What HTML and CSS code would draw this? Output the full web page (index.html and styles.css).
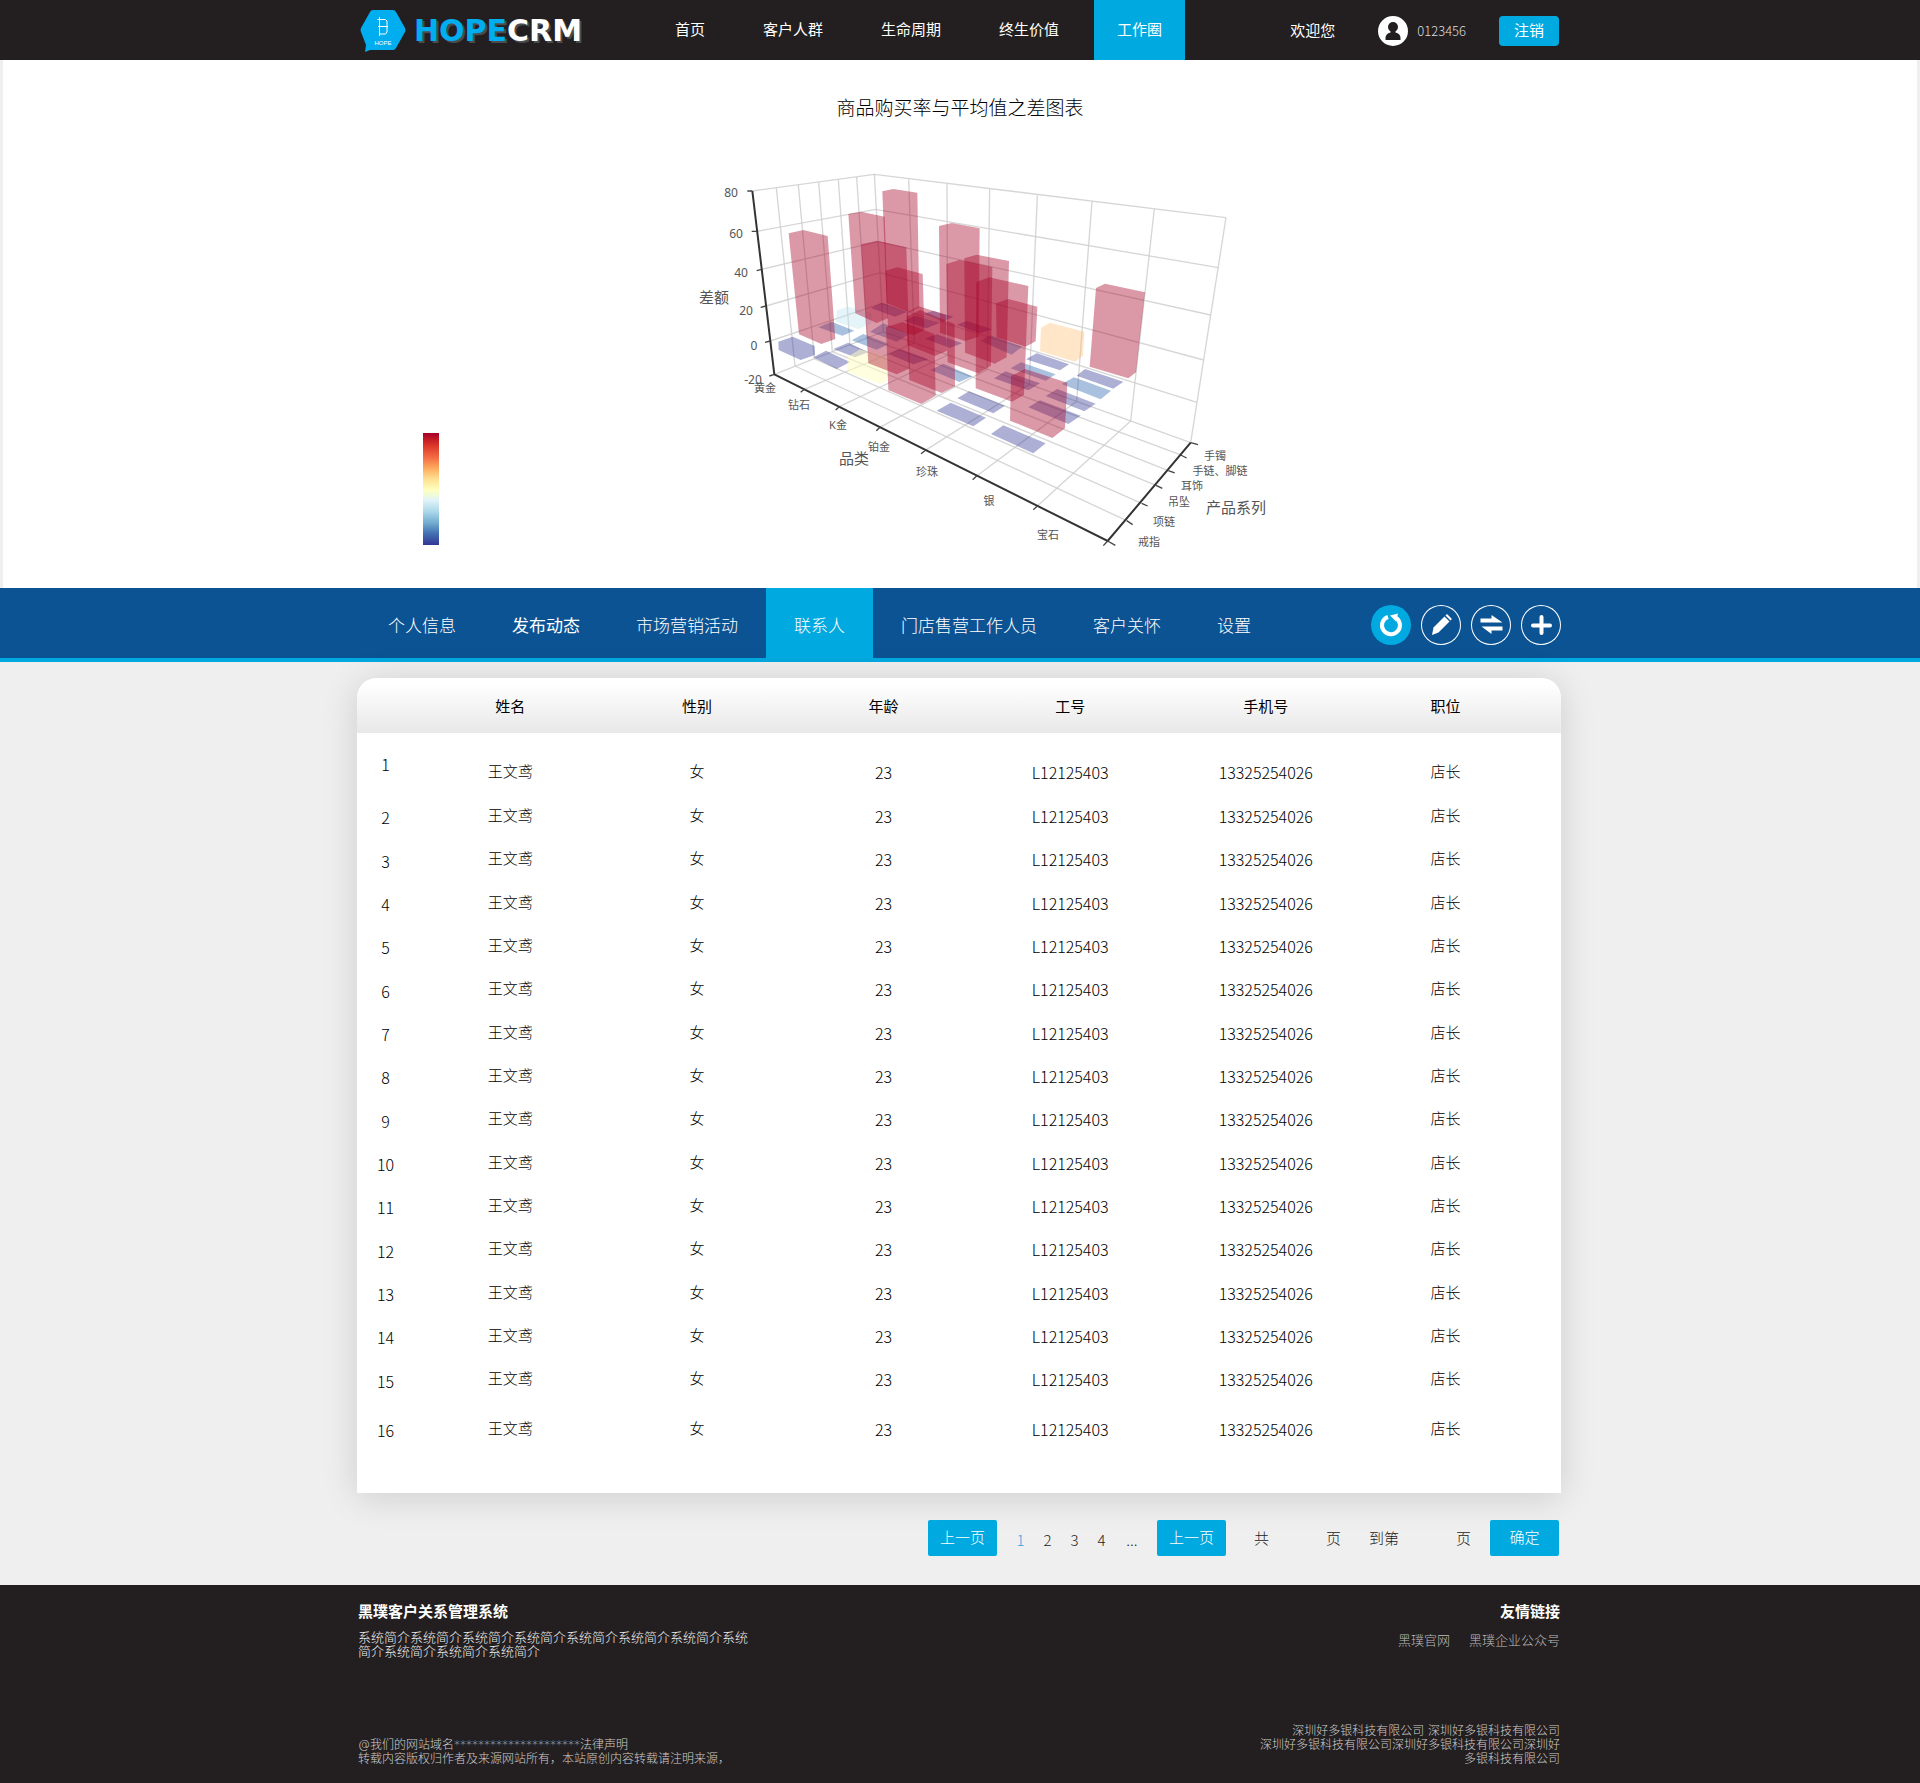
FILE: index.html
```html
<!DOCTYPE html>
<html lang="zh-CN">
<head>
<meta charset="utf-8">
<meta name="viewport" content="width=device-width, initial-scale=1">
<title>HOPECRM</title>
<link rel="stylesheet" href="styles.css">
</head>
<body>
<header class="topbar">
  <div class="wrap topbar-row">
    <a class="logo" href="#">
      <svg class="logo-mark" viewBox="0 0 46 42" width="46" height="42" aria-hidden="true">
        <path class="logo-hex" d="M13 0H33Q35 0 36 2L45 18Q46 20 45 22L36 38Q35 40 33 40H10L5 42L6 35L1 22Q0 20 1 18L10 2Q11 0 13 0Z"/>
        <path class="logo-line" d="M19.500 7V26M17.500 9.500H25.500L27 11V14.500V22L25.500 24H19.500M18 16.500H28"/>
        <text class="logo-small" x="23" y="35" text-anchor="middle">HOPE</text>
      </svg>
      <span class="wordmark">HOPE<span class="wordmark-crm">CRM</span></span>
    </a>
    <nav class="main-nav">
      <a href="#">首页</a>
      <a href="#">客户人群</a>
      <a href="#">生命周期</a>
      <a href="#">终生价值</a>
      <a href="#" class="current">工作圈</a>
    </nav>
    <div class="user">
      <span>欢迎您</span>
      <svg class="avatar" viewBox="0 0 30 30" width="30" height="30" aria-hidden="true">
        <circle cx="15" cy="15" r="15" fill="#fff"/>
        <circle cx="15" cy="11" r="5" fill="#231f20"/>
        <path d="M12.500 14H17.500V16.500Q22.500 17.500 22.500 22V24H7.500V22Q7.500 17.500 12.500 16.500Z" fill="#231f20"/>
      </svg>
      <span class="user-id">0123456</span>
      <button type="button" class="logout">注销</button>
    </div>
  </div>
</header>

<main>
<section class="chart-panel">
  <h1 class="chart-title">商品购买率与平均值之差图表</h1>
  <div class="wrap">
    <div class="chart-row">
    <div class="legend"></div>
    <svg class="chart" viewBox="0 0 600 400" width="600" height="400" role="img" aria-label="商品购买率与平均值之差图表">
      <g transform="scale(.33333) translate(-30 -30)">
        <g class="grid">
          <path d="M217 123L583 73L1638 203M231 244L587 178L1615 353M245 358L593 275L1592 495M258 468L600 368L1571 630M271 573L605 460L1551 757M283 673L610 545L1532 878"/>
          <path d="M289 114L345 648M355 105L403 626M416 97L457 605M475 89L510 585M530 81L562 564M583 73L610 545"/>
          <path d="M686 88L703 579M801 102L803 615M929 118L922 658M1072 136L1048 703M1236 155L1190 754M1423 177L1352 813M1638 203L1532 878"/>
          <path d="M373 718L703 579M478 770L803 615M600 832L922 658M735 902L1048 703M890 978L1190 754M1073 1067L1352 813"/>
          <path d="M345 648L1340 1112M403 626L1385 1060M457 605L1428 1006M510 585L1465 962M562 564L1502 915"/>
        </g>
        <g class="low">
          <polygon points="295,575 338,560 404,588 405,615 362,630 296,600"/>
          <polygon points="400,622 438,602 510,636 470,657"/>
          <polygon class="mid" points="415,532 455,515 523,542 487,557"/>
          <polygon points="460,597 505,578 565,607 525,622"/>
          <polygon class="mid" points="515,571 550,552 627,582 590,599"/>
          <polygon class="mid" points="570,545 610,520 688,552 650,575"/>
          <polygon points="573,474 605,458 680,486 645,500"/>
          <polygon points="672,512 705,497 780,518 740,535"/>
          <polygon points="730,492 760,482 820,500 788,515"/>
          <polygon points="830,524 860,513 937,538 900,550"/>
          <polygon points="625,612 660,597 745,628 700,643"/>
          <polygon points="735,566 770,553 846,580 810,594"/>
          <polygon class="mid" points="752,660 790,641 877,679 838,696"/>
          <polygon points="832,745 867,724 975,767 940,790"/>
          <polygon points="770,782 812,758 918,803 880,829"/>
          <polygon points="933,852 970,826 1097,880 1060,910"/>
          <polygon points="1045,772 1080,751 1202,797 1165,822"/>
          <polygon points="1097,738 1132,717 1247,761 1213,784"/>
          <polygon class="mid" points="1145,702 1182,682 1293,722 1262,748"/>
          <polygon points="1190,677 1215,657 1330,695 1300,716"/>
          <polygon points="1038,628 1070,610 1167,643 1140,661"/>
          <polygon class="mid" points="992,655 1023,637 1127,673 1097,692"/>
          <polygon points="942,685 977,664 1080,700 1045,721"/>
          <polygon class="mid" points="902,573 930,556 1026,590 995,614"/>
        </g>
        <polygon class="pale" points="470,480 505,470 575,490 575,520 535,538 468,515"/>
        <polygon class="yellow" points="503,620 540,598 625,620 625,690 600,702 502,665"/>
        <polygon class="orange" points="1083,533 1110,518 1213,545 1209,617 1185,635 1080,603"/>
        <g class="high">
          <polygon points="326,250 370,240 443,258 466,567 424,582 357,553"/>
          <polygon points="505,192 543,185 614,200 624,505 590,519 526,490"/>
          <polygon points="607,124 640,117 712,128 718,472 690,487 620,460"/>
          <polygon points="543,283 592,272 679,292 690,655 650,673 565,640"/>
          <polygon points="616,362 652,352 728,372 733,540 700,556 624,530"/>
          <polygon points="618,532 667,516 763,552 767,737 724,762 625,720"/>
          <polygon points="680,487 717,469 797,495 801,602 765,618 682,585"/>
          <polygon points="680,500 720,480 824,522 825,709 785,729 688,690"/>
          <polygon points="777,228 815,219 899,235 896,560 855,573 780,548"/>
          <polygon points="799,342 838,330 937,351 933,647 895,670 803,637"/>
          <polygon points="853,325 890,314 987,333 980,622 944,641 855,608"/>
          <polygon points="889,396 928,382 1045,408 1032,735 996,755 887,715"/>
          <polygon points="948,460 985,447 1072,470 1067,574 1037,590 950,562"/>
          <polygon points="993,678 1035,657 1162,698 1155,835 1117,864 990,812"/>
          <polygon points="1248,414 1275,401 1395,427 1368,667 1345,685 1229,650"/>
        </g>
        <path class="axis" d="M217 123L283 673L1283 1173L1532 878"/>
        <path class="tick" d="M217 123H202M231 244H215M245 358L230 362M258 468L242 472M271 573L255 577M283 673L268 678M373 718L362 727M478 770L467 780M600 832L589 842M735 902L723 911M890 978L878 989M1073 1067L1060 1079M1283 1173L1270 1187M1283 1173L1306 1186M1340 1112L1358 1124M1385 1060L1403 1068M1428 1006L1447 1015M1465 962L1484 969M1502 915L1520 924M1532 878L1554 884"/>
      </g>
      <g class="ticks">
        <text x="41" y="37">80</text><text x="46" y="78">60</text><text x="51" y="117">40</text>
        <text x="56" y="155">20</text><text x="64" y="190">0</text><text x="63" y="224">-20</text>
      </g>
      <g class="cats">
        <text x="75" y="232">黄金</text><text x="109" y="249">钻石</text><text x="148" y="269">K金</text>
        <text x="189" y="291">铂金</text><text x="237" y="316">珍珠</text><text x="299" y="345">银</text>
        <text x="358" y="379">宝石</text><text x="525" y="300">手镯</text><text x="530" y="315">手链、脚链</text>
        <text x="502" y="330">耳饰</text><text x="489" y="346">吊坠</text><text x="474" y="366">项链</text>
        <text x="459" y="386">戒指</text>
      </g>
      <g class="names">
        <text x="24" y="143">差额</text><text x="164" y="304">品类</text><text x="546" y="353">产品系列</text>
      </g>
    </svg>
    </div>
  </div>
</section>

<section class="subbar">
  <div class="wrap subbar-row">
    <nav class="sub-nav">
      <a href="#">个人信息</a>
      <a href="#" class="strong">发布动态</a>
      <a href="#">市场营销活动</a>
      <a href="#" class="current">联系人</a>
      <a href="#">门店售营工作人员</a>
      <a href="#">客户关怀</a>
      <a href="#">设置</a>
    </nav>
    <div class="tools">
      <button type="button" class="tool active" aria-label="刷新">
        <svg viewBox="0 0 40 40" width="40" height="40"><path d="M17 11.800A9 9 0 1 0 24.500 12.500" fill="none" stroke="#fff" stroke-width="4"/><path d="M19 10.500L27 8.500L25 16.500Z" fill="#fff"/></svg>
      </button>
      <button type="button" class="tool" aria-label="编辑">
        <svg viewBox="0 0 40 40" width="40" height="40"><path d="M12.500 22.500L23.500 11.500L28.500 16.500L17.500 27.500L11 30Z" fill="#fff"/><path d="M24.500 10.500L25.500 9.500Q26 9 26.500 9.500L30.500 13.500Q31 14 30.500 14.500L29.500 15.500Z" fill="#fff"/></svg>
      </button>
      <button type="button" class="tool" aria-label="切换">
        <svg viewBox="0 0 40 40" width="40" height="40"><path d="M9.500 13.500H20.500V10L31.500 17.500H9.500ZM31.500 21.500V25.500H20.500V29L10.500 21.500Z" fill="#fff"/></svg>
      </button>
      <button type="button" class="tool" aria-label="添加">
        <svg viewBox="0 0 40 40" width="40" height="40"><path d="M20.500 12V28M12 20.500H29" stroke="#fff" stroke-width="4" stroke-linecap="round"/></svg>
      </button>
    </div>
  </div>
</section>

<section class="wrap">
  <div class="card">
    <table class="people">
      <colgroup><col class="c-index"><col class="c-name"><col class="c-sex"><col class="c-age"><col class="c-code"><col class="c-phone"><col class="c-post"></colgroup>
      <thead>
        <tr><td></td><th scope="col">姓名</th><th scope="col">性别</th><th scope="col">年龄</th><th scope="col">工号</th><th scope="col">手机号</th><th scope="col">职位</th></tr>
      </thead>
      <tbody>
        <tr><th scope="row">1</th><td>王文鸢</td><td>女</td><td class="num">23</td><td class="num">L12125403</td><td class="num">13325254026</td><td>店长</td></tr>
        <tr><th scope="row">2</th><td>王文鸢</td><td>女</td><td class="num">23</td><td class="num">L12125403</td><td class="num">13325254026</td><td>店长</td></tr>
        <tr><th scope="row">3</th><td>王文鸢</td><td>女</td><td class="num">23</td><td class="num">L12125403</td><td class="num">13325254026</td><td>店长</td></tr>
        <tr><th scope="row">4</th><td>王文鸢</td><td>女</td><td class="num">23</td><td class="num">L12125403</td><td class="num">13325254026</td><td>店长</td></tr>
        <tr><th scope="row">5</th><td>王文鸢</td><td>女</td><td class="num">23</td><td class="num">L12125403</td><td class="num">13325254026</td><td>店长</td></tr>
        <tr><th scope="row">6</th><td>王文鸢</td><td>女</td><td class="num">23</td><td class="num">L12125403</td><td class="num">13325254026</td><td>店长</td></tr>
        <tr><th scope="row">7</th><td>王文鸢</td><td>女</td><td class="num">23</td><td class="num">L12125403</td><td class="num">13325254026</td><td>店长</td></tr>
        <tr><th scope="row">8</th><td>王文鸢</td><td>女</td><td class="num">23</td><td class="num">L12125403</td><td class="num">13325254026</td><td>店长</td></tr>
        <tr><th scope="row">9</th><td>王文鸢</td><td>女</td><td class="num">23</td><td class="num">L12125403</td><td class="num">13325254026</td><td>店长</td></tr>
        <tr><th scope="row">10</th><td>王文鸢</td><td>女</td><td class="num">23</td><td class="num">L12125403</td><td class="num">13325254026</td><td>店长</td></tr>
        <tr><th scope="row">11</th><td>王文鸢</td><td>女</td><td class="num">23</td><td class="num">L12125403</td><td class="num">13325254026</td><td>店长</td></tr>
        <tr><th scope="row">12</th><td>王文鸢</td><td>女</td><td class="num">23</td><td class="num">L12125403</td><td class="num">13325254026</td><td>店长</td></tr>
        <tr><th scope="row">13</th><td>王文鸢</td><td>女</td><td class="num">23</td><td class="num">L12125403</td><td class="num">13325254026</td><td>店长</td></tr>
        <tr><th scope="row">14</th><td>王文鸢</td><td>女</td><td class="num">23</td><td class="num">L12125403</td><td class="num">13325254026</td><td>店长</td></tr>
        <tr><th scope="row">15</th><td>王文鸢</td><td>女</td><td class="num">23</td><td class="num">L12125403</td><td class="num">13325254026</td><td>店长</td></tr>
        <tr><th scope="row">16</th><td>王文鸢</td><td>女</td><td class="num">23</td><td class="num">L12125403</td><td class="num">13325254026</td><td>店长</td></tr>
      </tbody>
    </table>
  </div>
  <div class="pager">
    <button type="button" class="pager-btn">上一页</button>
    <div class="pages">
      <a href="#" class="on">1</a><a href="#">2</a><a href="#">3</a><a href="#">4</a><span>...</span>
    </div>
    <button type="button" class="pager-btn">上一页</button>
    <div class="pager-field"><label for="total">共</label><input id="total" type="text"><span>页</span></div>
    <div class="pager-field"><label for="goto">到第</label><input id="goto" type="text"><span>页</span></div>
    <button type="button" class="pager-btn">确定</button>
  </div>
</section>
</main>

<footer class="footer">
  <div class="wrap">
    <div class="footer-row">
    <div class="footer-col">
      <div>
        <h2>黑璞客户关系管理系统</h2>
        <p class="intro">系统简介系统简介系统简介系统简介系统简介系统简介系统简介系统简介系统简介系统简介系统简介</p>
      </div>
      <p class="legal">@我们的网站域名*********************法律声明<br>转载内容版权归作者及来源网站所有，本站原创内容转载请注明来源，</p>
    </div>
    <div class="footer-col right">
      <div>
        <h2>友情链接</h2>
        <div class="links"><a href="#">黑璞官网</a><a href="#">黑璞企业公众号</a></div>
      </div>
      <p class="legal">深圳好多银科技有限公司 深圳好多银科技有限公司<br>深圳好多银科技有限公司深圳好多银科技有限公司深圳好<br>多银科技有限公司</p>
    </div>
    </div>
  </div>
</footer>
</body>
</html>
```
FILE: styles.css
```css
* { box-sizing: border-box; }

body {
  margin: 0;
  background: #efefef;
  color: #000;
  font: 300 15px/20px "Liberation Sans", "Noto Sans CJK SC", sans-serif;
}

a { color: inherit; text-decoration: none; }
button, input { font: inherit; color: inherit; border: 0; padding: 0; }
button { cursor: pointer; }
h1, h2, p { margin: 0; }

.wrap { width: 100%; max-width: 1206px; margin: 0 auto; padding-right: 2px; }

/* top bar */
.topbar { background: #231f20; color: #fff; }
.topbar-row { display: flex; align-items: stretch; min-height: 60px; }
.logo { display: flex; align-items: center; gap: 8px; width: 295px; padding: 2px 0 0 3px; }
.logo-hex { fill: #00adef; }
.logo-line { fill: none; stroke: #fff; stroke-width: 1; }
.logo-small { fill: #fff; font: 6px "Liberation Sans", sans-serif; }
.wordmark { color: #00adef; font: bold 30px/40px "DejaVu Sans", sans-serif; text-shadow: 2px 2px 0 #4a4d4f; }
.wordmark-crm { color: #fff; }
.main-nav { display: flex; gap: 12px; }
.main-nav a { display: flex; align-items: center; padding: 0 23px; font-weight: 400; }
.main-nav .current { background: #00a9e0; }
.user { display: flex; align-items: center; margin-left: auto; padding: 2px 2px 0 0; font-weight: 400; }
.user .avatar { margin-left: 43px; }
.user-id {
  margin: 0 33px 0 9px;
  color: #ddd;
  font-size: 13px;
  font-weight: 300;
  font-family: "Noto Sans CJK SC", sans-serif;
}
.logout { width: 60px; height: 30px; border-radius: 4px; background: #00a9e0; }

/* chart */
.chart-panel { margin: 0 3px; padding: 35px 0 28px; background: #fff; }
.chart-title { margin-bottom: 37px; font-size: 19px; line-height: 28px; font-weight: 300; text-align: center; color: #000; }
.chart-row { display: flex; align-items: flex-end; gap: 251px; padding-left: 66px; }
.legend {
  width: 16px;
  height: 112px;
  margin-bottom: 15px;
  background: linear-gradient(#a50026, #d73027 10%, #f46d43 22%, #fdae61 32%, #fee090 41%, #ffffbf 51%, #e0f3f8 60%, #abd9e9 70%, #74add1 80%, #4575b4 89%, #313695);
}
.chart { flex: none; font-family: "Noto Sans", "Noto Sans CJK SC", sans-serif; }
.grid { fill: none; stroke: #ccc; stroke-opacity: .8; stroke-width: 4; }
.low { fill: #313695; fill-opacity: .4; }
.low .mid { fill: #2b62b0; }
.pale { fill: #bfe4f0; fill-opacity: .4; }
.yellow { fill: #ffffbf; fill-opacity: .5; }
.orange { fill: #ffc175; fill-opacity: .4; }
.high { fill: #a50026; fill-opacity: .4; }
.axis { fill: none; stroke: #333; stroke-width: 6; }
.tick { fill: none; stroke: #444; stroke-width: 4; }
.chart text { text-anchor: middle; fill: #555; font-weight: 400; }
.ticks { font-size: 12px; }
.cats { font-size: 11px; }
.names { font-size: 15px; }

/* section bar */
.subbar { background: #0c5394; border-bottom: 4px solid #00a9e0; color: #fff; }
.subbar-row { display: flex; align-items: stretch; justify-content: space-between; min-height: 70px; }
.sub-nav { display: flex; padding-left: 3px; }
.sub-nav a { display: flex; align-items: center; padding: 8px 28px 0; font-size: 17px; }
.sub-nav .strong { font-weight: 400; }
.sub-nav .current { background: #00a9e0; }
.tools { display: flex; align-items: center; gap: 10px; padding-top: 4px; }
.tool { width: 40px; height: 40px; border-radius: 50%; background: none; box-shadow: inset 0 0 0 1px #fff; }
.tool.active { background: #00a9e0; box-shadow: none; }
.tool svg { display: block; }

/* contacts table */
.card {
  margin-top: 16px;
  padding-bottom: 37px;
  overflow: hidden;
  border-radius: 20px 20px 0 0;
  background: #fff;
  box-shadow: 0 4px 36px rgba(0, 0, 0, .14);
}
.people { width: 100%; border-collapse: collapse; table-layout: fixed; text-align: center; }
.c-index { width: 57px; }
.c-name { width: 16%; }
.c-sex { width: 15%; }
.c-age { width: 16%; }
.c-code { width: 15%; }
.c-phone { width: 17.5%; }
.people th, .people td { padding: 0; font-weight: 300; }
.people th:last-child, .people td:last-child { padding-right: 41px; }
.people thead tr { height: 55px; background: linear-gradient(#fff 10%, #e8e8e8); }
.people thead th { padding-top: 2px; font-weight: 400; }
.people tbody tr { height: 43px; }
.people tbody tr:nth-child(3n) { height: 44px; }
.people tbody tr:first-child { height: 61px; }
.people tbody tr:last-child { height: 55px; }
.people tbody th { padding-top: 3px; }
.people tbody th, .people .num { font-family: "Noto Sans CJK SC", sans-serif; font-size: 16px; }
.people tbody tr:first-child th { padding-top: 0; }
.people tbody tr:first-child td { padding-top: 16px; }

/* pager */
.pager { display: flex; justify-content: flex-end; align-items: center; padding: 27px 2px 29px 0; color: #222; }
.pager-btn { width: 69px; height: 36px; border-radius: 2px; background: #00a9e0; color: #fff; }
.pages { display: flex; padding: 4px 8px 0 10px; text-align: center; font-family: "Noto Sans CJK SC", sans-serif; }
.pages a { width: 27px; }
.pages span { width: 34px; }
.pages .on { color: #2ea6e0; }
.pager-field { display: flex; margin-left: 28px; padding-top: 2px; }
.pager-field input { width: 57px; background: transparent; text-align: center; }
.pager-field + .pager-btn { margin-left: 19px; }

/* footer */
.footer { background: #231f20; color: #eee; font-size: 13px; line-height: 14px; }
.footer-row { display: flex; justify-content: space-between; padding: 18px 0 17px; }
.footer-col { display: flex; flex-direction: column; justify-content: space-between; gap: 79px; padding-left: 1px; }
.footer h2 { color: #fff; font-size: 15px; line-height: 18px; font-weight: 700; }
.intro { max-width: 392px; margin-top: 10px; }
.legal { color: #ccc; font-family: "DejaVu Sans", "Noto Sans CJK SC", sans-serif; font-size: 12px; }
.right { padding: 0 1px 0 0; text-align: right; gap: 40px; }
.links { display: flex; justify-content: flex-end; gap: 19px; margin-top: 13px; color: #bbb; }
```
